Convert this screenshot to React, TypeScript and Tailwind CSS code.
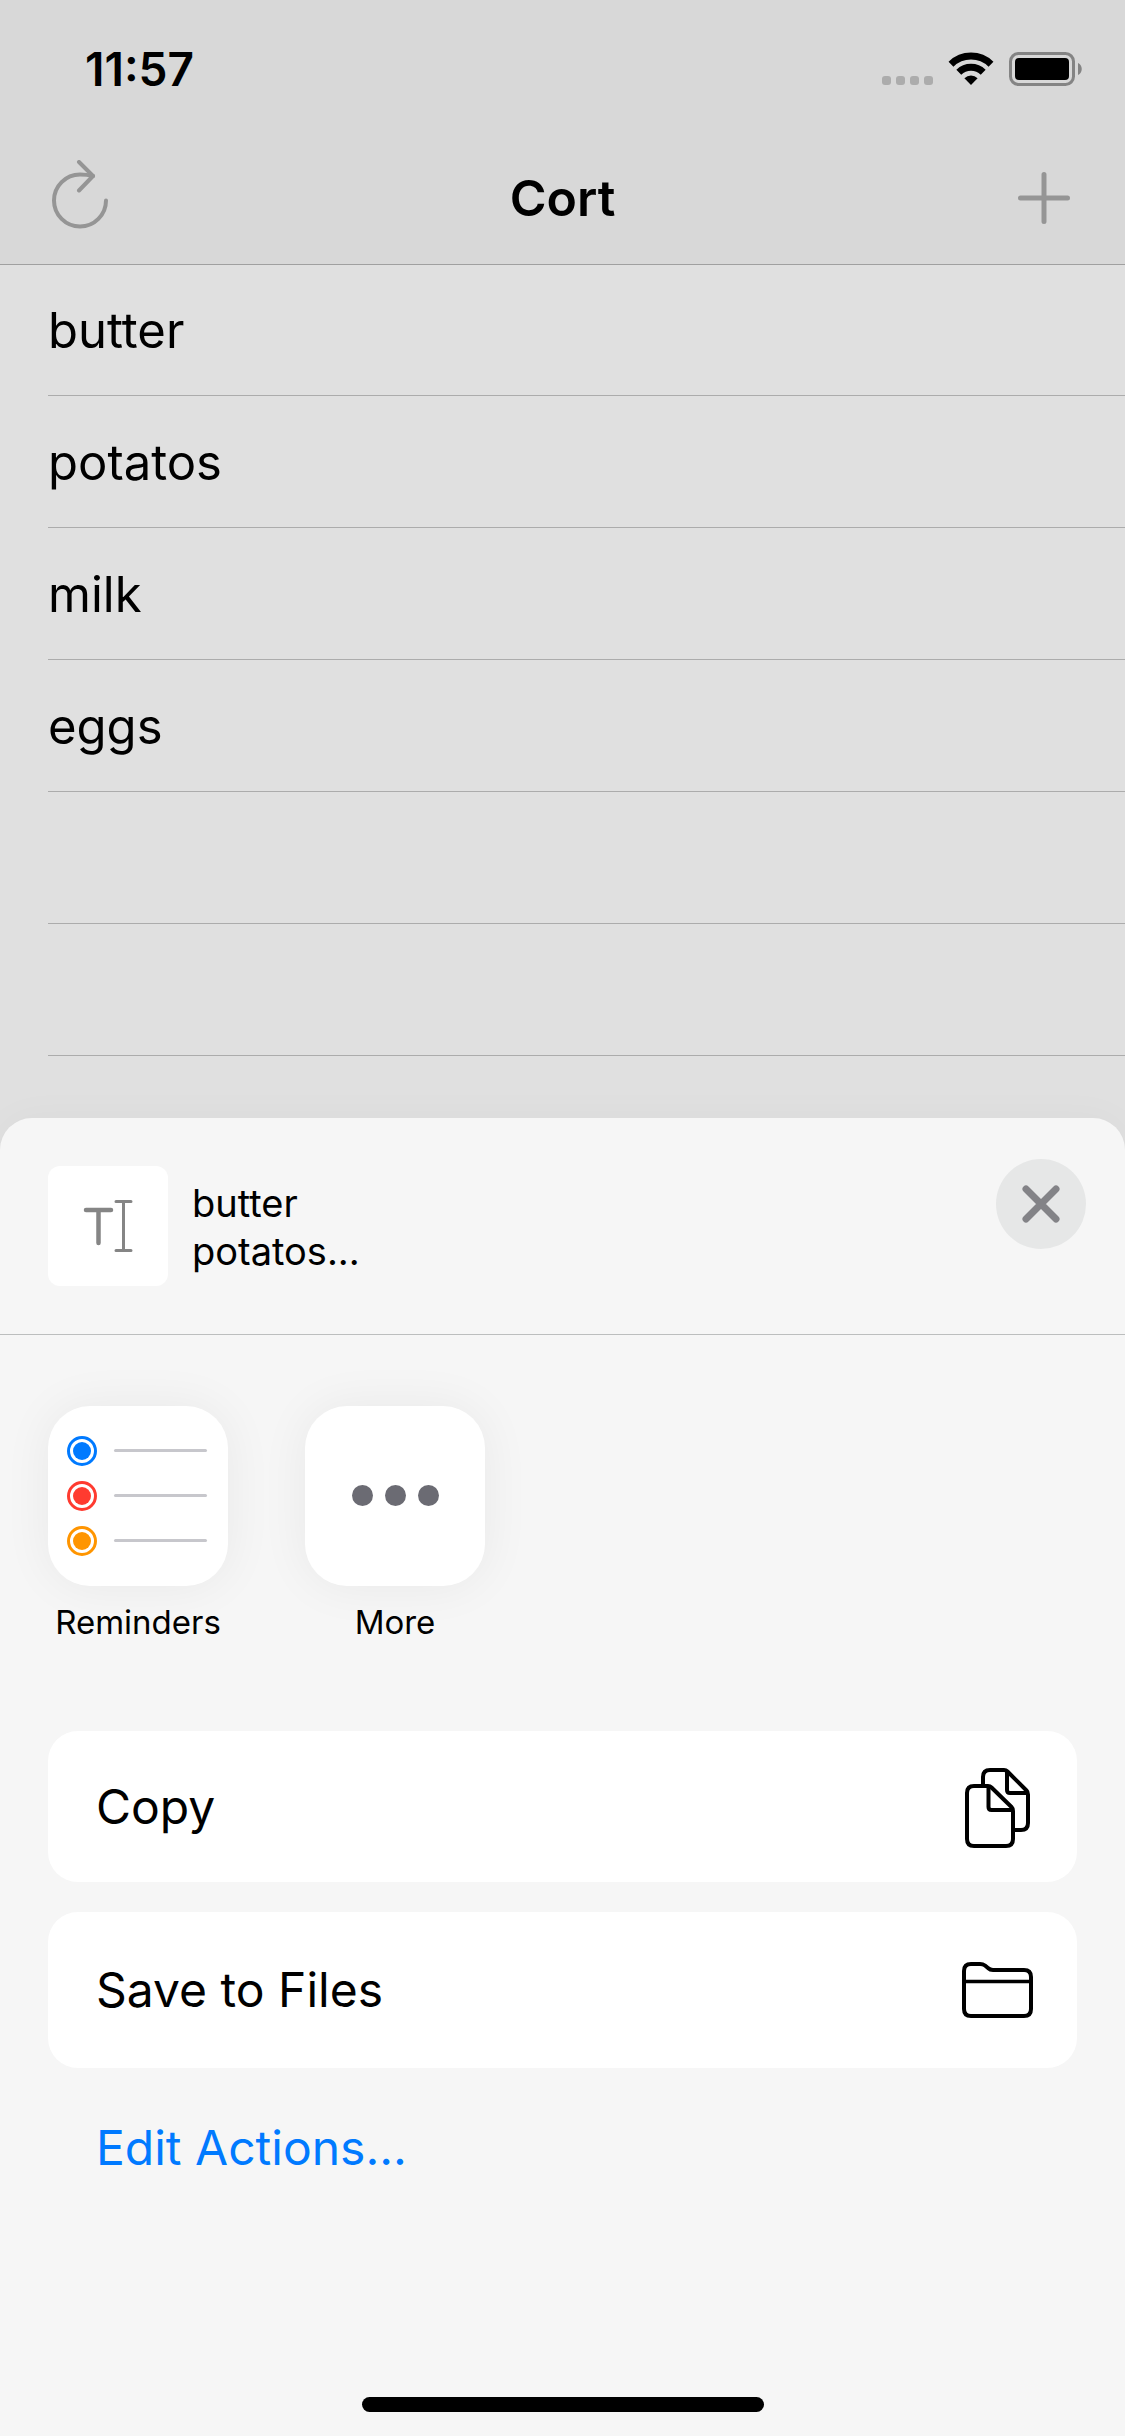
import React from "react";

const items = ["butter", "potatos", "milk", "eggs", "", ""];

const reminderRows = [
  { y: 45, color: "#007aff" },
  { y: 90, color: "#ff3b30" },
  { y: 135, color: "#ff9500" },
];

function StatusBar() {
  return (
    <div className="flex h-[132px] items-start justify-between pt-[41px] pr-[42px] pl-[85px]">
      <time className="text-[46px] leading-[56px] font-semibold">11:57</time>
      <div className="flex items-start pt-[11px]">
        <svg width="52" height="34" viewBox="0 0 52 34" fill="#acacac" aria-label="No signal">
          <rect x="0" y="24" width="9" height="9" rx="3" />
          <rect x="14" y="24" width="9" height="9" rx="3" />
          <rect x="28" y="24" width="9" height="9" rx="3" />
          <rect x="42" y="24" width="9" height="9" rx="3" />
        </svg>
        <svg className="ml-[14px]" width="46" height="34" viewBox="0 0 46 34" aria-label="Wi-Fi">
          <g fill="none" stroke="#000" strokeWidth="7">
            <path d="M3 12.2A28.6 28.6 0 0 1 43 12.2" />
            <path d="M10.8 20.2A17.5 17.5 0 0 1 35.2 20.2" />
          </g>
          <path d="M23 33l-6.6-6.7a9.4 9.4 0 0 1 13.2 0z" />
        </svg>
        <svg className="ml-[15px]" width="74" height="34" viewBox="0 0 74 34" aria-label="Battery full">
          <rect x="1.5" y="1.5" width="63" height="31" rx="8" fill="none" stroke="#848484" strokeWidth="3" />
          <rect x="6" y="6" width="54" height="22" rx="4" />
          <path d="M69 11c5 2 5 10 0 12z" fill="#848484" />
        </svg>
      </div>
    </div>
  );
}

function NavBar() {
  return (
    <div className="grid h-[132px] grid-cols-[1fr_auto_1fr] items-center px-[48px]">
      <button aria-label="Refresh" className="justify-self-start">
        <svg
          width="64"
          height="76"
          viewBox="0 0 64 76"
          fill="none"
          stroke="#959595"
          strokeWidth="4"
          strokeLinecap="round"
          strokeLinejoin="round"
        >
          <path d="M58 40.5A26 26 0 1 1 32 14.5Q39 14.5 45 16" />
          <path d="M31 2l14 14l-14 14.5" />
        </svg>
      </button>
      <h1 className="text-[50px] leading-[60px] font-semibold">Cort</h1>
      <button aria-label="Add" className="justify-self-end">
        <svg width="66" height="60" viewBox="0 0 66 60" stroke="#959595" strokeWidth="5" strokeLinecap="round">
          <path d="M33 6.5v47M9.5 30h47" />
        </svg>
      </button>
    </div>
  );
}

function TextIcon() {
  return (
    <svg width="120" height="120" viewBox="0 0 120 120" stroke="#858585" strokeLinecap="round" fill="none" aria-hidden="true">
      <path d="M38 44h25M50.5 44v33" strokeWidth="4.5" />
      <path d="M68 35.5h15M68 84.5h15M75.5 36v48" strokeWidth="3" />
    </svg>
  );
}

function RemindersIcon() {
  return (
    <svg width="180" height="180" viewBox="0 0 180 180" aria-hidden="true">
      {reminderRows.map((row) => (
        <g key={row.y}>
          <circle cx="34" cy={row.y} r="13.5" fill="none" stroke={row.color} strokeWidth="3" />
          <circle cx="34" cy={row.y} r="9" fill={row.color} />
          <rect x="66" y={row.y - 2} width="93" height="3" rx="1.5" fill="#c7c7cc" />
        </g>
      ))}
    </svg>
  );
}

function MoreIcon() {
  return (
    <svg width="180" height="180" viewBox="0 0 180 180" fill="#6b6b73" aria-hidden="true">
      <circle cx="57.5" cy="89.5" r="10.5" />
      <circle cx="90.5" cy="89.5" r="10.5" />
      <circle cx="123.5" cy="89.5" r="10.5" />
    </svg>
  );
}

function CopyIcon() {
  return (
    <svg width="72" height="84" viewBox="0 -3 72 84" fill="none" stroke="#000" strokeWidth="4" strokeLinejoin="round" aria-hidden="true">
      <path d="M21 17V9q0-7 7-7h14q2 0 3.5 1.5L64.500 22.500q1.500 1.500 1.500 4V55q0 7-7 7h-8" />
      <path d="M45 3v19q0 3 3 3h17" />
      <path d="M12 18h14q2 0 3.5 1.5L49.500 39q1.500 1.500 1.500 4V71q0 7-7 7H12q-7 0-7-7V25q0-7 7-7z" />
      <path d="M26.500 18v21q0 3 3 3h21" />
    </svg>
  );
}

function FolderIcon() {
  return (
    <svg width="72" height="56" viewBox="0 0 72 56" fill="none" stroke="#000" strokeWidth="4" strokeLinejoin="round" aria-hidden="true">
      <path d="M2 9q0-7 7-7h9q3 0 5 1.5l3 2.5q2 2 5 2h31q7 0 7 7V47q0 7-7 7H9q-7 0-7-7z" />
      <path d="M2 19.5h67" strokeWidth="3.5" />
    </svg>
  );
}

function AppButton({ label, children }: { label: string; children: React.ReactNode }) {
  return (
    <button className="flex w-[180px] flex-col items-center gap-[16px]">
      <span className="block rounded-[42px] bg-white shadow-[0_0_50px_rgba(0,0,0,0.06)]">{children}</span>
      <span className="text-[33px] leading-[40px] whitespace-nowrap">{label}</span>
    </button>
  );
}

export default function App() {
  return (
    <div className="flex min-h-screen flex-col bg-[#e0e0e0] font-[Inter,sans-serif] text-black">
      <header className="border-b border-[#a0a0a0] bg-[#d8d8d8]">
        <StatusBar />
        <NavBar />
      </header>

      <ul className="-mt-px pb-[62px] pl-[48px]">
        {items.map((item, i) => (
          <li key={i} className="flex h-[132px] items-center border-b border-[#acacac] pt-[2px] text-[49px] leading-[60px]">
            {item}
          </li>
        ))}
      </ul>

      <section
        aria-label="Share"
        className="flex flex-1 flex-col rounded-t-[32px] bg-[#f6f6f6] shadow-[0_0_40px_rgba(0,0,0,0.03)]"
      >
        <div className="flex items-start border-b border-[#bcbebe] p-[48px] pr-[39px]">
          <div className="rounded-[12px] bg-white">
            <TextIcon />
          </div>
          <p className="ml-[24px] flex-1 pt-[13px] text-[38px] leading-[48px]">
            butter
            <br />
            potatos...
          </p>
          <button
            aria-label="Close"
            className="-mt-[7px] flex size-[90px] items-center justify-center rounded-full bg-[#e6e7e7]"
          >
            <svg width="38" height="38" viewBox="0 0 38 38" stroke="#838387" strokeWidth="7" strokeLinecap="round">
              <path d="M4 4l30 30M34 4L4 34" />
            </svg>
          </button>
        </div>

        <div className="flex gap-[77px] px-[48px] pt-[71px]">
          <AppButton label="Reminders">
            <RemindersIcon />
          </AppButton>
          <AppButton label="More">
            <MoreIcon />
          </AppButton>
        </div>

        <div className="flex flex-col gap-[30px] px-[48px] pt-[89px]">
          <button className="flex h-[151px] items-center justify-between rounded-[30px] bg-white pr-[43px] pl-[48px] text-[48px] leading-[60px]">
            Copy
            <CopyIcon />
          </button>
          <button className="flex h-[156px] items-center justify-between rounded-[30px] bg-white pr-[43px] pl-[48px] text-[48px] leading-[60px]">
            Save to Files
            <FolderIcon />
          </button>
        </div>
        <a href="#edit-actions" className="mt-[50px] ml-[96px] self-start text-[48px] leading-[60px] text-[#007aff]">
          Edit Actions...
        </a>

        <div className="mx-auto mt-auto mb-[24px] h-[15px] w-[402px] rounded-full bg-black" />
      </section>
    </div>
  );
}
